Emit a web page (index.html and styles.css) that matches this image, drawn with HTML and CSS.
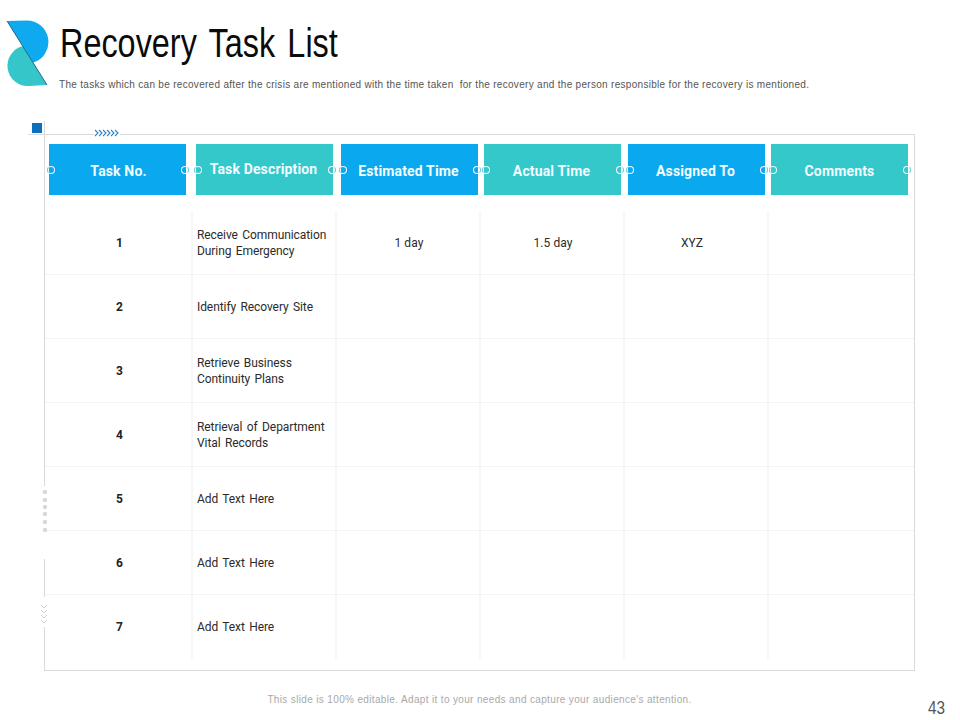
FILE: index.html
```html
<!DOCTYPE html>
<html lang="en">
<head>
<meta charset="utf-8">
<title>Recovery Task List</title>
<link rel="stylesheet" href="styles.css">
</head>
<body>
<div class="slide">
  <header class="head">
    <svg class="logo" width="50" height="90" viewBox="0 0 50 90" aria-hidden="true">
      <path d="M7 21L26 20.5A21.5 21.5 0 0 1 33 62.6Z" fill="#0ea9ee"/>
      <path d="M23 46A20.3 20.3 0 0 0 29 86L47 85Z" fill="#35c6c9"/>
      <line x1="7" y1="21" x2="47" y2="85" stroke="#17607e" stroke-width="0.9"/>
    </svg>
    <div class="head-text">
      <h1 class="title">Recovery Task List</h1>
      <p class="subtitle">The tasks which can be recovered after the crisis are mentioned with the time taken&nbsp; for the recovery and the person responsible for the recovery is mentioned.</p>
    </div>
  </header>

  <div class="board">
    <span class="deco-square"></span>
    <span class="deco-top-left"></span>
    <span class="deco-line-left"></span>
    <svg class="deco-chevrons" width="26" height="8" viewBox="0 0 26 8" aria-hidden="true">
      <path d="M1 1l3 3-3 3M5 1l3 3-3 3M9 1l3 3-3 3M13 1l3 3-3 3M17 1l3 3-3 3M21 1l3 3-3 3" fill="none" stroke="#2a86c4" stroke-width="1.1"/>
    </svg>
    <span class="deco-gap deco-gap-dots"></span>
    <span class="deco-gap deco-gap-chevrons"></span>
    <svg class="deco-dots" width="6" height="44" viewBox="0 0 6 44" aria-hidden="true">
      <g fill="#d8d8d8">
        <circle cx="3" cy="3" r="2.2"/><circle cx="3" cy="11" r="2.2"/><circle cx="3" cy="18" r="2.2"/>
        <circle cx="3" cy="25" r="2.2"/><circle cx="3" cy="33" r="2.2"/><circle cx="3" cy="41" r="2.2"/>
      </g>
    </svg>
    <svg class="deco-down" width="8" height="22" viewBox="0 0 8 22" aria-hidden="true">
      <path d="M1 1l3 3 3-3M1 6l3 3 3-3M1 11l3 3 3-3M1 16l3 3 3-3" fill="none" stroke="#d2d2d2" stroke-width="1"/>
    </svg>

    <div class="columns">
      <div class="col-head blue">Task No.</div>
      <div class="col-head teal raised">Task Description</div>
      <div class="col-head blue">Estimated Time</div>
      <div class="col-head teal">Actual Time</div>
      <div class="col-head blue">Assigned To</div>
      <div class="col-head teal">Comments</div>
    </div>

    <div class="rows">
      <div class="row">
        <div class="cell num">1</div>
        <div class="cell desc">Receive Communication During Emergency</div>
        <div class="cell val">1 day</div>
        <div class="cell val">1.5 day</div>
        <div class="cell val shift">XYZ</div>
        <div class="cell"></div>
      </div>
      <div class="row">
        <div class="cell num">2</div>
        <div class="cell desc">Identify Recovery Site</div>
        <div class="cell"></div><div class="cell"></div><div class="cell"></div><div class="cell"></div>
      </div>
      <div class="row">
        <div class="cell num">3</div>
        <div class="cell desc">Retrieve Business Continuity Plans</div>
        <div class="cell"></div><div class="cell"></div><div class="cell"></div><div class="cell"></div>
      </div>
      <div class="row">
        <div class="cell num">4</div>
        <div class="cell desc">Retrieval of Department Vital Records</div>
        <div class="cell"></div><div class="cell"></div><div class="cell"></div><div class="cell"></div>
      </div>
      <div class="row">
        <div class="cell num">5</div>
        <div class="cell desc">Add Text Here</div>
        <div class="cell"></div><div class="cell"></div><div class="cell"></div><div class="cell"></div>
      </div>
      <div class="row">
        <div class="cell num">6</div>
        <div class="cell desc">Add Text Here</div>
        <div class="cell"></div><div class="cell"></div><div class="cell"></div><div class="cell"></div>
      </div>
      <div class="row">
        <div class="cell num">7</div>
        <div class="cell desc">Add Text Here</div>
        <div class="cell"></div><div class="cell"></div><div class="cell"></div><div class="cell"></div>
      </div>
    </div>
  </div>

  <footer class="foot">
    <p class="note">This slide is 100% editable. Adapt it to your needs and capture your audience's attention.</p>
    <span class="page">43</span>
  </footer>
</div>
</body>
</html>
```

FILE: styles.css
```css
* { box-sizing: border-box; }
html, body { margin: 0; padding: 0; background: #fff; }
.slide {
  width: 960px;
  height: 720px;
  overflow: hidden;
  display: flex;
  flex-direction: column;
  background: #fff;
  font-family: "Roboto", "Liberation Sans", sans-serif;
}

/* Header */
.head {
  height: 134px;
  display: flex;
  align-items: flex-start;
}
.logo { flex: none; display: block; }
.head-text { padding: 21px 0 0 10px; }
.title {
  margin: 0;
  font-family: "Liberation Sans", sans-serif;
  font-weight: 400;
  font-size: 40px;
  line-height: 44px;
  color: #0b0b0b;
  word-spacing: 4px;
  white-space: nowrap;
  transform: scaleX(0.81);
  transform-origin: left center;
}
.subtitle {
  margin: 14px 0 0 -1px;
  font-family: "Liberation Sans", sans-serif;
  font-size: 10px;
  line-height: 12px;
  color: #555;
  white-space: nowrap;
  letter-spacing: 0.3px;
}

/* Framed table */
.board {
  position: relative;
  margin-left: 44px;
  width: 871px;
  height: 537px;
  border: 1px solid #d9d9d9;
}
.deco-square {
  position: absolute;
  left: -13px;
  top: -12px;
  width: 10px;
  height: 10px;
  background: #0a70bd;
}
.deco-top-left {
  position: absolute;
  left: -17px;
  top: -1px;
  width: 17px;
  height: 1px;
  background: #dcdcdc;
}
.deco-line-left {
  position: absolute;
  left: -1px;
  top: -14px;
  width: 1px;
  height: 14px;
  background: #dcdcdc;
}
.deco-chevrons { position: absolute; left: 49px; top: -6px; background: #fff; }
.deco-gap { position: absolute; left: -2px; width: 3px; background: #fff; }
.deco-gap-dots { top: 351px; height: 73px; }
.deco-gap-chevrons { top: 462px; height: 30px; }
.deco-dots { position: absolute; left: -3px; top: 354px; }
.deco-down { position: absolute; left: -5px; top: 469px; }

/* Column heads */
.columns {
  display: flex;
  padding: 9px 0 0 4px;
}
.col-head {
  position: relative;
  flex: none;
  width: 137px;
  height: 51px;
  display: flex;
  align-items: center;
  justify-content: center;
  color: #f2fbff;
  font-size: 14px;
  font-weight: 700;
  letter-spacing: 0.15px;
  padding: 2px 2px 0 0;
}
.col-head:nth-child(1) { padding: 2px 0 0 2px; }
.col-head:nth-child(2) { margin-left: 10px; }
.col-head:nth-child(3) { margin-left: 8px; }
.col-head:nth-child(4) { margin-left: 6px; }
.col-head:nth-child(5) { margin-left: 7px; }
.col-head:nth-child(6) { margin-left: 6px; padding: 2px 0 0; }
.col-head::before,
.col-head::after {
  content: "";
  position: absolute;
  top: 22px;
  width: 6px;
  height: 6px;
  border-radius: 50%;
  border: 1px solid #f2fbff;
}
.col-head::before { left: -2px; border-left-color: #62cde0; }
.col-head::after { right: -3px; border-right-color: #62cde0; }
.blue { background: #0aa9ef; }
.teal { background: #34c8ca; }
.col-head.raised { padding: 0 2px 2px 0; }

/* Rows */
.rows { margin-top: 16px; }
.row {
  display: grid;
  grid-template-columns: 148px 144px 144px 144px 144px 1fr;
  height: 64px;
  border-bottom: 1px solid #f3f3f3;
}
.row:last-child { border-bottom: 0; }
.cell {
  display: flex;
  align-items: center;
  border-right: 2px solid #f6f6f6;
  font-size: 12px;
  line-height: 16px;
  color: #2b2b2b;
}
.cell:last-child { border-right: 0; }
.num { justify-content: center; font-weight: 700; color: #222; padding-left: 3px; }
.desc { padding: 0 4px; word-spacing: 1.5px; letter-spacing: -0.08px; }
.val { justify-content: center; padding-left: 2px; letter-spacing: 0.1px; }
.shift { padding-right: 10px; }

/* Footer */
.foot {
  position: relative;
  flex: 1;
  display: flex;
  justify-content: center;
}
.note {
  margin: 23px 0 0 -1px;
  font-family: "Liberation Sans", sans-serif;
  font-size: 10px;
  line-height: 12px;
  color: #a9a9a9;
  letter-spacing: 0.35px;
}
.page {
  position: absolute;
  left: 928px;
  top: 27px;
  font-family: "Liberation Sans", sans-serif;
  font-size: 18px;
  line-height: 20px;
  color: #555;
  transform: scaleX(0.85);
  transform-origin: left center;
}
```
